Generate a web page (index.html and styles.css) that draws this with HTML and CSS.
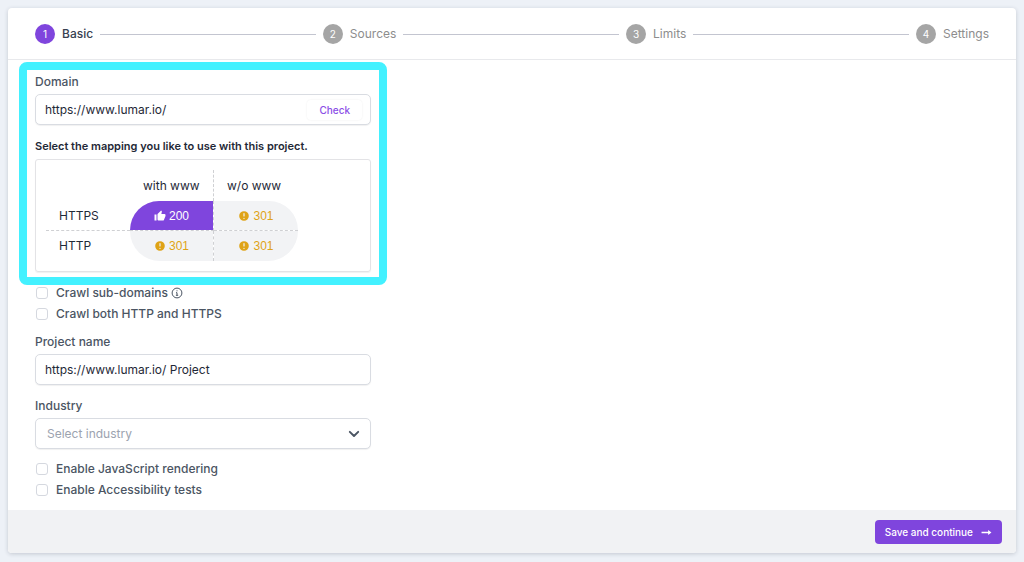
FILE: index.html
```html
<!DOCTYPE html>
<html lang="en">
<head>
<meta charset="utf-8">
<meta name="viewport" content="width=device-width, initial-scale=1">
<title>Project setup</title>
<link rel="stylesheet" href="styles.css">
</head>
<body>
<svg class="sprite" aria-hidden="true">
  <symbol id="alert" viewBox="0 0 20 20"><path fill="currentColor" fill-rule="evenodd" d="M18 10a8 8 0 1 1-16 0 8 8 0 0 1 16 0Zm-7 4a1 1 0 1 1-2 0 1 1 0 0 1 2 0Zm-1-9a1 1 0 0 0-1 1v4a1 1 0 1 0 2 0V6a1 1 0 0 0-1-1Z"/></symbol>
  <symbol id="thumb" viewBox="0 0 24 24"><path fill="currentColor" d="M1 21h4V9H1v12Zm22-11a2 2 0 0 0-2-2h-6.300l1-4.600v-.300c0-.400-.200-.800-.400-1.100L14.200 1 7.600 7.600C7.200 8 7 8.500 7 9v10a2 2 0 0 0 2 2h9c.800 0 1.500-.500 1.800-1.200l3-7.100c.100-.200.200-.500.200-.700v-2Z"/></symbol>
</svg>
<form class="card">
  <ol class="steps">
    <li class="step current" aria-current="step"><span class="num">1</span>Basic</li>
    <li class="line" role="presentation"></li>
    <li class="step"><span class="num">2</span>Sources</li>
    <li class="line" role="presentation"></li>
    <li class="step"><span class="num">3</span>Limits</li>
    <li class="line" role="presentation"></li>
    <li class="step"><span class="num">4</span>Settings</li>
  </ol>

  <main class="body">
    <section class="domain">
      <label class="label" for="domain">Domain</label>
      <div class="field">
        <input class="field-input" id="domain" type="text" value="https://www.lumar.io/">
        <button class="check" type="button">Check</button>
      </div>
      <p class="prompt">Select the mapping you like to use with this project.</p>
      <div class="mapping">
        <table class="grid">
          <thead>
            <tr><td></td><th scope="col">with www</th><th scope="col">w/o www</th></tr>
          </thead>
          <tbody>
            <tr>
              <th scope="row">HTTPS</th>
              <td><button class="status top-left selected" type="button"><svg class="status-icon"><use href="#thumb"/></svg>200</button></td>
              <td><button class="status top-right" type="button"><svg class="status-icon"><use href="#alert"/></svg>301</button></td>
            </tr>
            <tr>
              <th scope="row">HTTP</th>
              <td><button class="status bottom-left" type="button"><svg class="status-icon"><use href="#alert"/></svg>301</button></td>
              <td><button class="status bottom-right" type="button"><svg class="status-icon"><use href="#alert"/></svg>301</button></td>
            </tr>
          </tbody>
        </table>
      </div>
    </section>

    <div class="options">
      <label class="option"><input class="box" type="checkbox">Crawl sub-domains
        <svg class="info" viewBox="0 0 12 12" fill="none" stroke="currentColor"><circle cx="6" cy="6" r="4.900"/><path d="M5 5.700h1v2.600M4.900 8.300h2.300"/><path d="M5.500 3.800h1"/></svg>
      </label>
      <label class="option"><input class="box" type="checkbox">Crawl both HTTP and HTTPS</label>
    </div>

    <div class="group">
      <label class="label" for="name">Project name</label>
      <div class="field"><input class="field-input" id="name" type="text" value="https://www.lumar.io/ Project"></div>
    </div>

    <div class="group">
      <label class="label" for="industry">Industry</label>
      <div class="field">
        <select class="field-select" id="industry"><option>Select industry</option></select>
        <svg class="chevron" viewBox="0 0 10 10" fill="none" stroke="currentColor" stroke-width="1.600" stroke-linecap="round" stroke-linejoin="round"><path d="M1.500 3.200 5 6.700l3.500-3.500"/></svg>
      </div>
    </div>

    <div class="options">
      <label class="option"><input class="box" type="checkbox">Enable JavaScript rendering</label>
      <label class="option"><input class="box" type="checkbox">Enable Accessibility tests</label>
    </div>
  </main>

  <footer class="footer">
    <button class="save" type="submit">Save and continue
      <svg class="arrow" viewBox="0 0 10 8" fill="currentColor"><path d="M.500 3.400h6V1.700L9.500 4 6.500 6.300V4.600h-6Z"/></svg>
    </button>
  </footer>
</form>
</body>
</html>
```
FILE: styles.css
```css
* { box-sizing: border-box; }

body {
  margin: 0;
  padding: 8px;
  background: #edf1f7;
  color: #4b5563;
  font: 500 12px/20px Inter, "Liberation Sans", sans-serif;
}

button, input, select { font: inherit; color: inherit; }
button { cursor: pointer; }
.sprite { display: none; }

.card {
  background: #fff;
  border-radius: 4px;
  box-shadow: 0 1px 4px rgba(30, 41, 59, 0.2);
}

.steps {
  display: flex;
  align-items: center;
  gap: 7px;
  margin: 0;
  padding: 16px 27px 15px;
  border-bottom: 1px solid #e8e9ec;
  list-style: none;
  color: #8d8d8d;
  font-weight: 400;
}
.step { display: flex; align-items: center; gap: 7px; }
.step.current { color: #374151; font-weight: 500; }
.num {
  width: 20px;
  height: 20px;
  border-radius: 50%;
  background: #a5a5a5;
  color: #fff;
  font-size: 10px;
  font-weight: 400;
  text-align: center;
}
.current .num { background: #7f45dd; }
.line { flex: 1; height: 1px; background: #c3c5d0; }

.body { padding: 12px 27px 10px; }

.domain { position: relative; width: 336px; max-width: 100%; }
.domain::after {
  content: "";
  position: absolute;
  inset: -10px -16px -13px;
  border: 8px solid #43f1ff;
  border-radius: 8px;
  pointer-events: none;
}

.label { display: block; margin-bottom: 2px; }
.field {
  display: flex;
  align-items: center;
  width: 336px;
  max-width: 100%;
  height: 31px;
  border: 1px solid #d9dce2;
  border-radius: 5px;
  background: #fff;
  box-shadow: 0 1px 1px rgba(0, 0, 0, 0.06);
  color: #1f2937;
}
.field-input {
  flex: 1;
  min-width: 0;
  padding: 0 9px;
  border: 0;
  outline: 0;
  background: none;
  font-weight: 400;
}
.check {
  margin-right: 8px;
  padding: 0 12px;
  border: 0;
  border-radius: 4px;
  background: #fff;
  box-shadow: 0 0 2px rgba(0, 0, 0, 0.08);
  color: #8b4fe6;
  font-size: 10px;
}
.prompt {
  margin: 11px 0 3px;
  color: #1f2937;
  font-size: 11px;
  font-weight: 600;
}

.mapping {
  padding: 10px;
  border: 1px solid #e3e3e6;
  border-radius: 3px;
  box-shadow: 0 1px 1px rgba(0, 0, 0, 0.06);
}
.grid { border-collapse: separate; border-spacing: 0; color: #1f2937; }
.grid th { padding: 0 13px; font-weight: 400; text-align: left; }
.grid td { padding: 0; }
.grid th, .grid td { width: 84px; height: 30px; }
.grid thead th { height: 31px; }
.grid tr > :nth-child(2) { border-right: 1px dashed #cfd0d3; }
.grid tbody tr:first-child > * { border-bottom: 1px dashed #cfd0d3; }
.status {
  display: flex;
  align-items: center;
  justify-content: center;
  gap: 3px;
  width: 100%;
  height: 30px;
  padding: 0;
  border: 0;
  background: #f2f3f5;
  color: #dfa316;
  font-family: "Liberation Sans", sans-serif;
  font-weight: 400;
}
.selected { background: #7f45dd; color: #fff; }
.top-left, .top-right { height: 29px; }
.top-left { border-top-left-radius: 29px; }
.top-right { border-top-right-radius: 29px; }
.bottom-left { border-bottom-left-radius: 30px; }
.bottom-right { border-bottom-right-radius: 30px; }
.status-icon { width: 12px; height: 12px; }

.options { display: grid; gap: 1px; }
.domain + .options { margin-top: 11px; }
.option { display: flex; align-items: center; }
.box {
  appearance: none;
  width: 12px;
  height: 12px;
  margin: 0 8px 0 1px;
  border: 1px solid #d5d8df;
  border-radius: 3px;
  background: #fff;
}
.info { width: 12px; height: 12px; margin-left: 3px; }

.group { margin: 8px 0 10px; }
.group + .group { margin-top: 11px; }
.field-select {
  flex: 1;
  height: 100%;
  padding: 0 11px;
  border: 0;
  outline: 0;
  appearance: none;
  background: none;
  color: #9ca3af;
  font-weight: 400;
}
.chevron { width: 12px; height: 12px; margin-right: 10px; color: #4b5563; }

.footer {
  display: flex;
  justify-content: flex-end;
  padding: 10px 14px 9px;
  border-radius: 0 0 4px 4px;
  background: #f1f2f4;
}
.save {
  display: flex;
  align-items: center;
  gap: 8px;
  padding: 2px 10px;
  border: 0;
  border-radius: 4px;
  background: #7f45dd;
  color: #fff;
  font-size: 10px;
}
.arrow { width: 11px; height: 9px; }
```
